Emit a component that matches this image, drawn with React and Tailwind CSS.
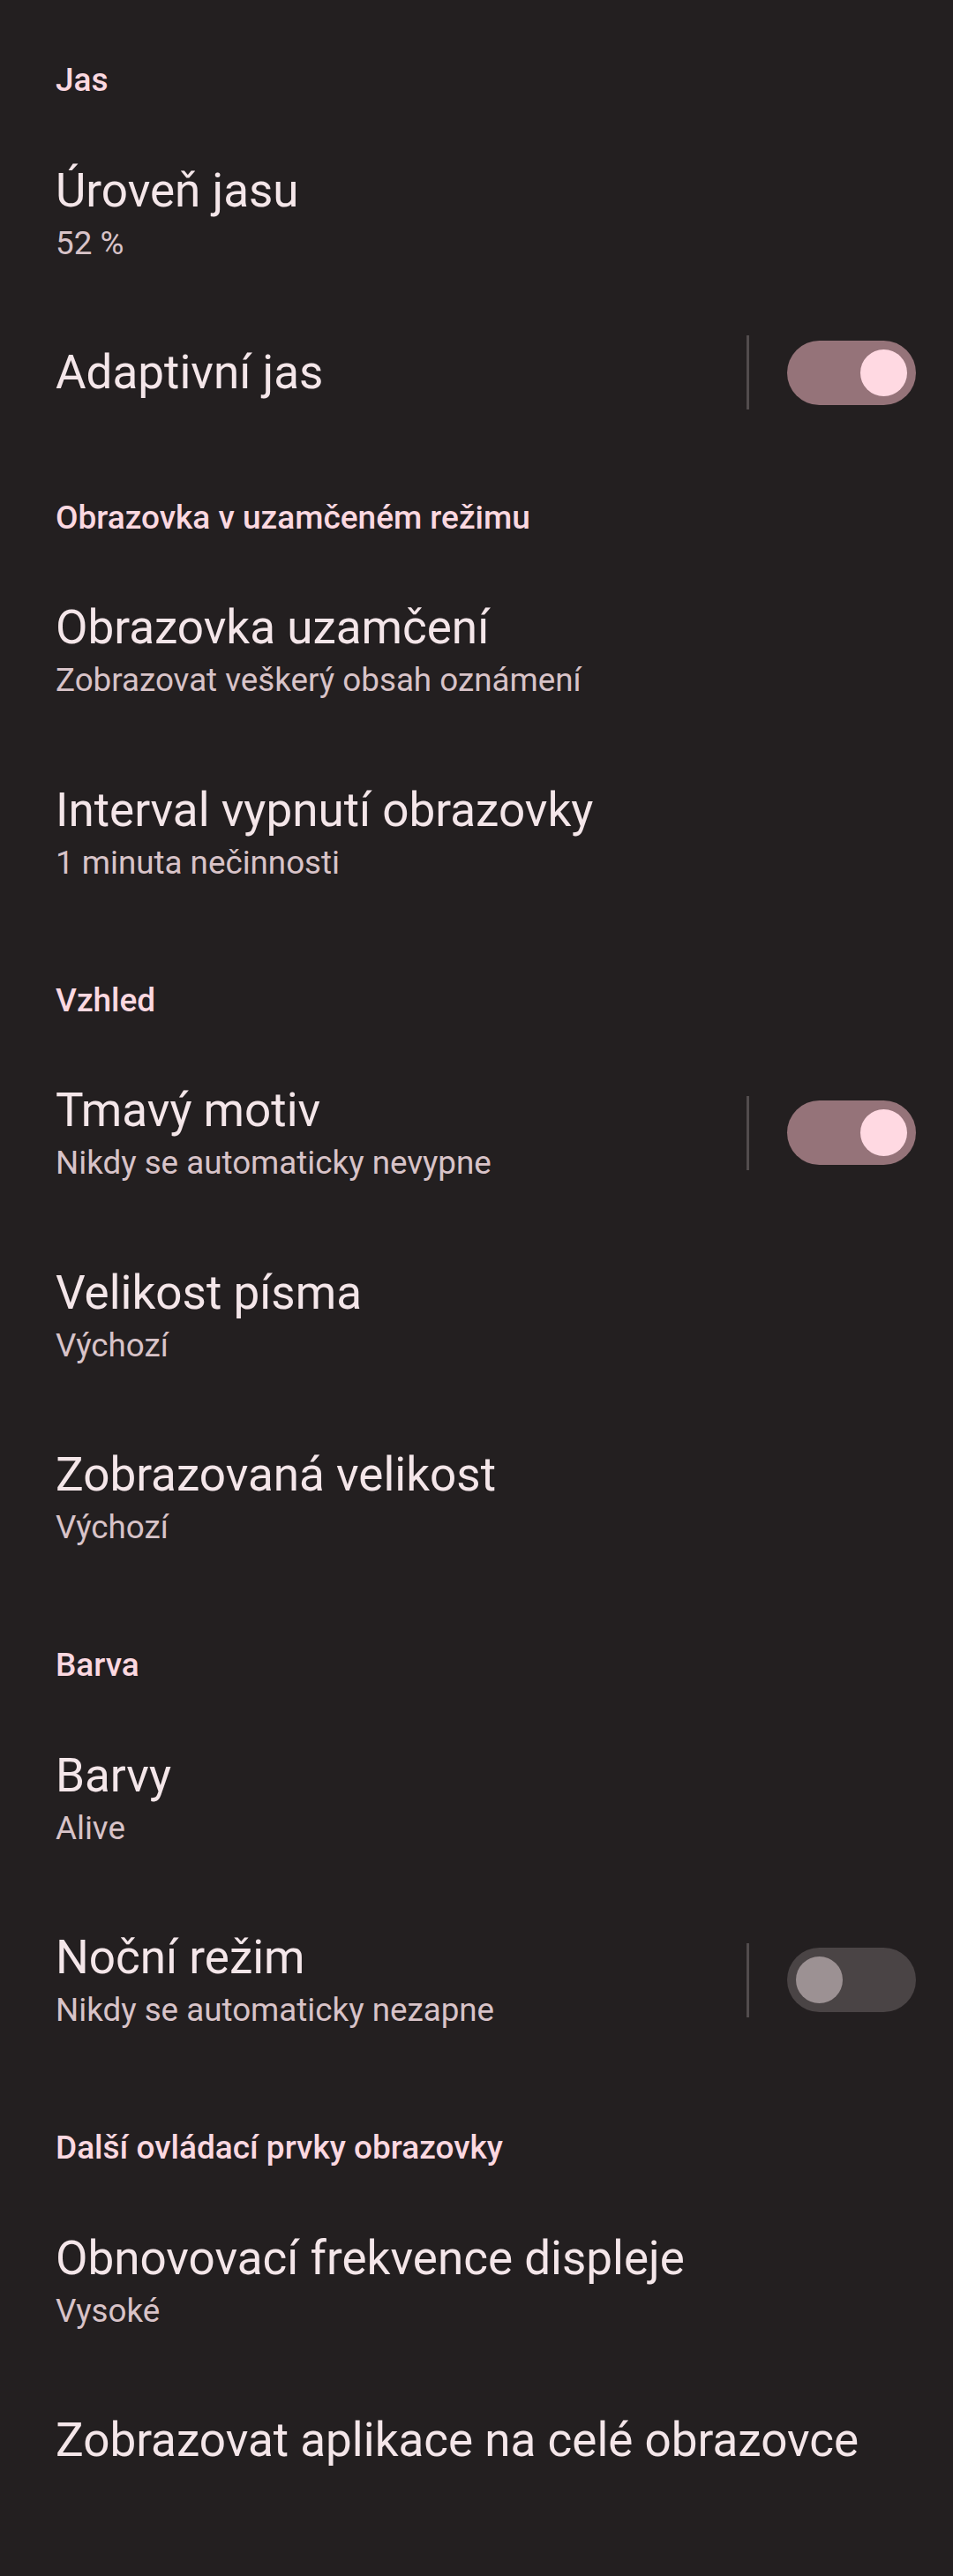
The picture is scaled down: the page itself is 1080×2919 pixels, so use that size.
import React from "react";

const Switch = ({ on }) => {
  return (
    <div
      className={`flex items-center w-[146px] h-[73px] rounded-full px-[10px] ${
        on ? "bg-[#957379] justify-end" : "bg-[#4a4445] justify-start"
      }`}
    >
      <div
        className={`w-[53px] h-[53px] rounded-full ${
          on ? "bg-[#ffd9e2]" : "bg-[#9c9193]"
        }`}
      />
    </div>
  );
};

const Header = ({ children }) => (
  <div className="h-[134px] pt-[63px] pl-[63px] text-[37px] leading-[48px] font-medium text-[#fbd8e0]">
    {children}
  </div>
);

const Item = ({ title, summary, toggle }) => (
  <div
    className={`flex items-center pl-[63px] pr-[42px] ${
      summary ? "h-[206.5px]" : "h-[155px]"
    }`}
  >
    <div className="flex-1 flex flex-col">
      <div className="text-[53px] leading-[68px] text-[#f4e6e9]">{title}</div>
      {summary && (
        <div className="text-[36.75px] leading-[51px] text-[#d8c3c8]">{summary}</div>
      )}
    </div>
    {toggle && (
      <>
        <div className="w-[3px] h-[84px] bg-[#524c4d] mr-[43px]" />
        <Switch on={toggle === "on"} />
      </>
    )}
  </div>
);

export default function App() {
  return (
    <div className="min-h-[2919px] bg-[#231f20] pt-[4px] font-['Roboto','Noto_Sans',sans-serif]">
      <Header>Jas</Header>
      <Item title="Úroveň jasu" summary="52 %" />
      <Item title="Adaptivní jas" toggle="on" />

      <Header>Obrazovka v uzamčeném režimu</Header>
      <Item title="Obrazovka uzamčení" summary="Zobrazovat veškerý obsah oznámení" />
      <Item title="Interval vypnutí obrazovky" summary="1 minuta nečinnosti" />

      <Header>Vzhled</Header>
      <Item title="Tmavý motiv" summary="Nikdy se automaticky nevypne" toggle="on" />
      <Item title="Velikost písma" summary="Výchozí" />
      <Item title="Zobrazovaná velikost" summary="Výchozí" />

      <Header>Barva</Header>
      <Item title="Barvy" summary="Alive" />
      <Item title="Noční režim" summary="Nikdy se automaticky nezapne" toggle="off" />

      <Header>Další ovládací prvky obrazovky</Header>
      <Item title="Obnovovací frekvence displeje" summary="Vysoké" />
      <Item title="Zobrazovat aplikace na celé obrazovce" />
    </div>
  );
}
